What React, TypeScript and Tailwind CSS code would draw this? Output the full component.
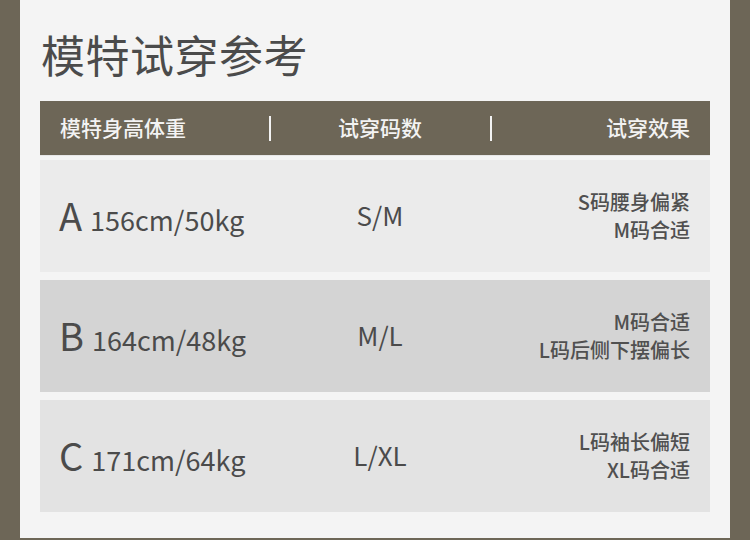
const font = { fontFamily: '"Noto Sans CJK SC", "Noto Sans", sans-serif' };

const rows = [
  { id: "A", body: "156cm/50kg", size: "S/M", notes: ["S码腰身偏紧", "M码合适"], bg: "bg-[#ebebeb]" },
  { id: "B", body: "164cm/48kg", size: "M/L", notes: ["M码合适", "L码后侧下摆偏长"], bg: "bg-[#d4d4d4]" },
  { id: "C", body: "171cm/64kg", size: "L/XL", notes: ["L码袖长偏短", "XL码合适"], bg: "bg-[#e3e3e3]" },
];

export default function App() {
  return (
    <div className="w-[750px] h-[540px] bg-[#6d6657] px-[20px] pb-[2px]" style={font}>
      <div className="h-full bg-[#f4f4f4] px-[20px] pt-[26px]">
        <h1 className="text-[44px] leading-[56px] tracking-[0.5px] text-[#4b4b4b] font-normal pl-[1px]">模特试穿参考</h1>

        {/* header bar */}
        <div className="mt-[19px] h-[54px] bg-[#6d6657] grid grid-cols-[229px_1px_220px_1px_1fr] items-center text-[#f3f3f3] text-[21px] font-medium shadow-[0_1px_0_#e6e6e6]">
          <span className="pl-[20px]">模特身高体重</span>
          <span className="h-[25px] w-[2px] bg-[#f3f3f3]" />
          <span className="text-center">试穿码数</span>
          <span className="h-[25px] w-[2px] bg-[#f3f3f3]" />
          <span className="text-right pr-[20px]">试穿效果</span>
        </div>

        <div className="mt-[5px] flex flex-col gap-[8px]">
          {rows.map((r) => (
            <div key={r.id} className={`h-[112px] ${r.bg} grid grid-cols-[229px_1px_220px_1px_1fr] items-center text-[#4b4b4b]`}>
              <div className="pl-[19px] pb-[3px] flex items-baseline gap-[8px]">
                <span className="text-[38px] leading-none">{r.id}</span>
                <span className="text-[27px] leading-none">{r.body}</span>
              </div>
              <span />
              <span className="text-center text-[26px] leading-none pb-[3px]">{r.size}</span>
              <span />
              <div className="text-right pr-[20px] text-[20px] leading-[28px] font-medium text-[#505050]">
                {r.notes.map((n) => (
                  <div key={n}>{n}</div>
                ))}
              </div>
            </div>
          ))}
        </div>
      </div>
    </div>
  );
}
